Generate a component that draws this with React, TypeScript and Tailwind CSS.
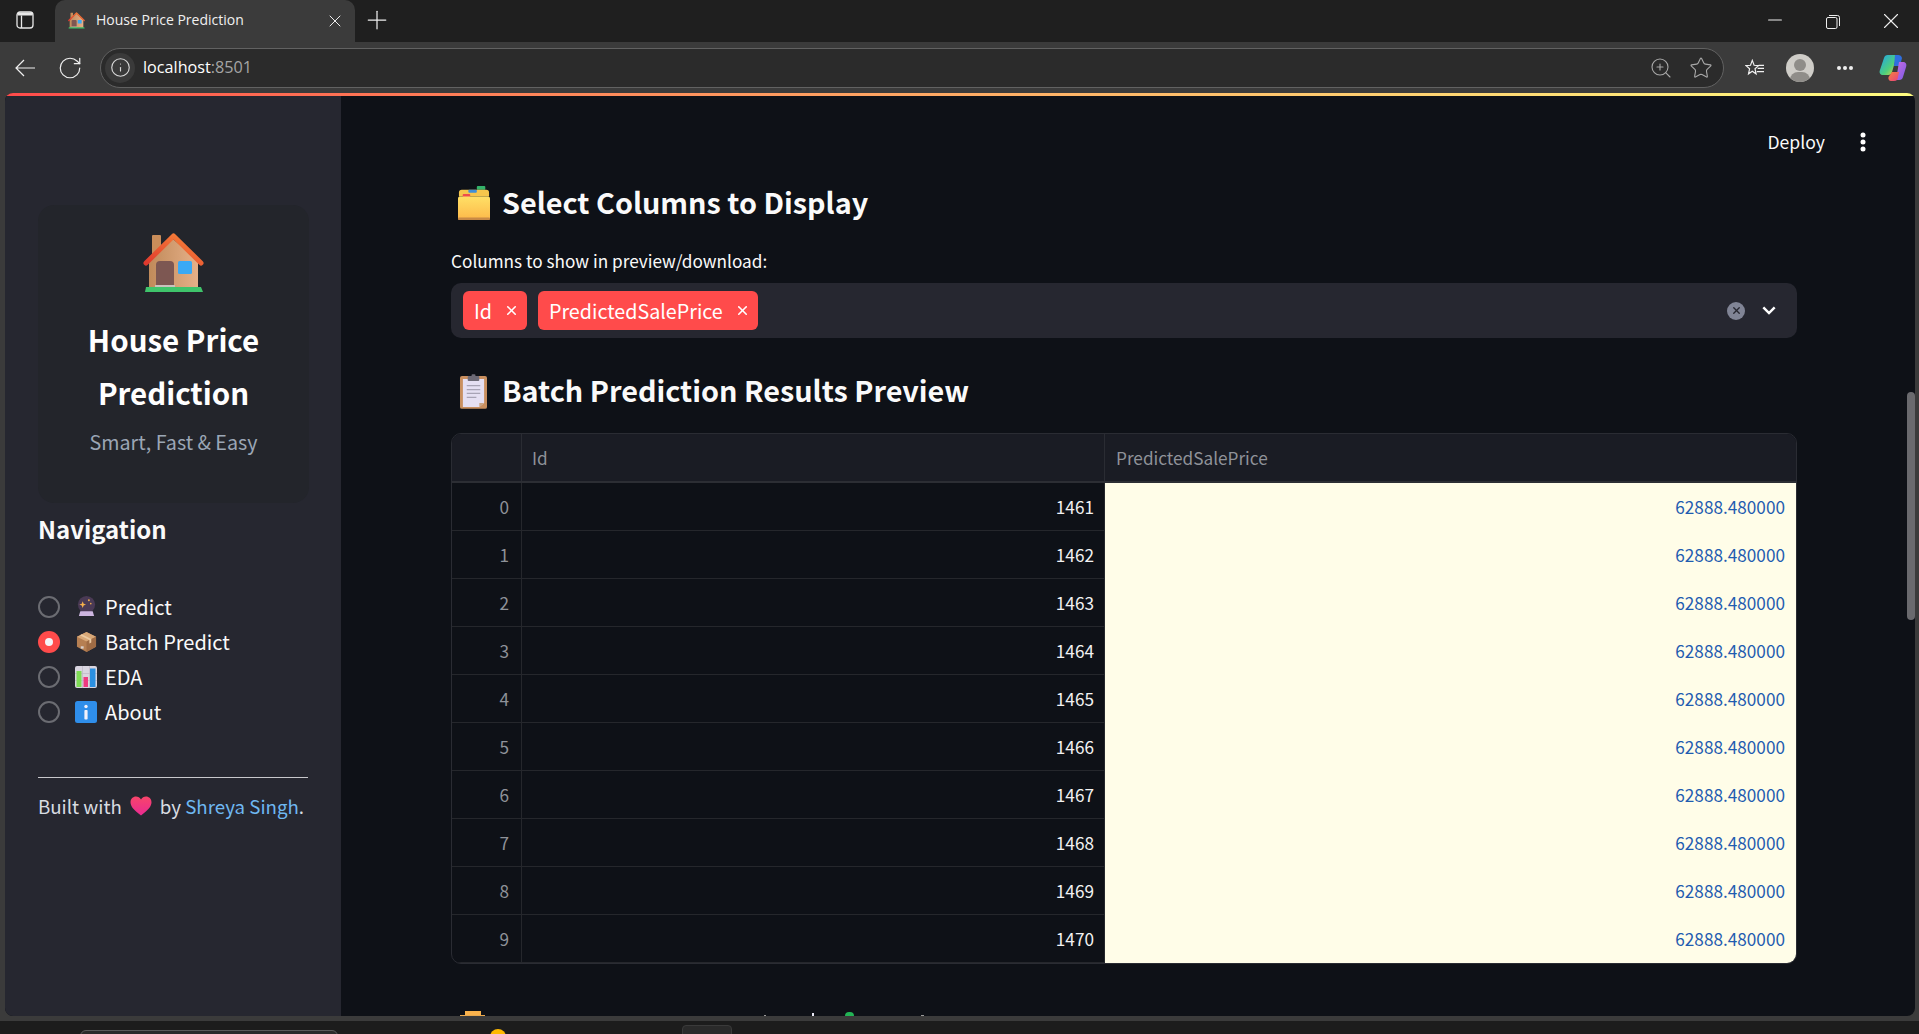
import { Info, Minus, Plus, RotateCw, Star, X, ZoomIn } from "lucide-react";

const sourceFont = "font-['Noto_Sans_CJK_SC','Noto_Sans',sans-serif]";

const rows = [1461, 1462, 1463, 1464, 1465, 1466, 1467, 1468, 1469, 1470];

function HouseEmoji({ className }: { className: string }) {
    return (
        <svg viewBox="0 0 61 60" className={className}>
            <defs>
                <linearGradient id="wall" x1="0" y1="0" x2="1" y2="0">
                    <stop offset="0" stopColor="#c08a5a" />
                    <stop offset="1" stopColor="#e6b088" />
                </linearGradient>
                <linearGradient id="roof" x1="0" y1="1" x2="1" y2="0">
                    <stop offset="0" stopColor="#e0392d" />
                    <stop offset="1" stopColor="#f98a3a" />
                </linearGradient>
            </defs>
            <rect x="9" y="2" width="9" height="24" rx="1" fill="#c98d5a" />
            <path d="M6 28 30 6 55 28V56H6Z" fill="url(#wall)" />
            <path d="M3 30 30.500 3 58 30" fill="none" stroke="url(#roof)" strokeWidth="5" strokeLinecap="round" strokeLinejoin="round" />
            <path d="M13 52V32a4 4 0 0 1 4-4h10a4 4 0 0 1 4 4v20Z" fill="#7d5752" />
            <rect x="35" y="28" width="14" height="13" rx="1.500" fill="#3aa9f5" />
            <rect x="12" y="52" width="20" height="3" fill="#c9c2bd" />
            <path d="M2 59 3 54H58L60 59Z" fill="#3fc46b" />
        </svg>
    );
}

function CrystalBall() {
    return (
        <svg viewBox="0 0 22 22" className="w-[21px] h-[21px]">
            <circle cx="11" cy="9" r="9" fill="#4a3a55" />
            <path d="M7 5.500 8 8l2.500 1L8 10l-1 2.500L6 10 3.500 9 6 8Z" fill="#f5b04c" />
            <circle cx="13.500" cy="4.500" r="1" fill="#f5b04c" />
            <circle cx="15.500" cy="8" r=".8" fill="#f5b04c" />
            <path d="M4.500 16h13l1.500 5H3Z" fill="#cdb5e0" />
        </svg>
    );
}

function BoxEmoji() {
    return (
        <svg viewBox="0 0 22 22" className="w-[21px] h-[21px]">
            <path d="M11 1 21 6v10.500L11 22 1 16.500V6Z" fill="#b67f52" />
            <path d="M11 1 21 6 11 11 1 6Z" fill="#d8a878" />
            <path d="M11 11 21 6v10.500L11 22Z" fill="#a06c45" />
            <path d="M6 3.500 16 8.500V12l-2 1V9.500L4 4.500Z" fill="#eccaa2" />
            <rect x="5" y="16" width="3" height="2.500" fill="#d8d0cc" />
        </svg>
    );
}

function ChartEmoji() {
    return (
        <svg viewBox="0 0 22 22" className="w-[22px] h-[22px]">
            <rect width="22" height="22" rx="2" fill="#d9d5e0" />
            <path d="M0 7.500h22M0 14.500h22M7.500 0v22M14.500 0v22" stroke="#bdb8c6" strokeWidth=".7" />
            <rect x="1.500" y="5" width="5" height="16" fill="#7edb55" />
            <rect x="8.500" y="11" width="4.500" height="10" fill="#ef3a80" />
            <rect x="15" y="2.500" width="5.500" height="18.500" fill="#2b8fe0" />
        </svg>
    );
}

function InfoEmoji() {
    return (
        <svg viewBox="0 0 22 22" className="w-[22px] h-[22px]">
            <rect width="22" height="22" rx="2.500" fill="#2f8eea" />
            <circle cx="11" cy="5.500" r="1.700" fill="#f2f0fa" />
            <rect x="9.400" y="9" width="3.200" height="9.500" rx=".8" fill="#f2f0fa" />
        </svg>
    );
}

function HeartEmoji() {
    return (
        <svg viewBox="0 0 22 20" className="w-[22px] h-[20px] mx-[8px] shrink-0">
            <defs>
                <linearGradient id="heart" x1="0" y1="0" x2="0" y2="1">
                    <stop offset="0" stopColor="#f8456a" />
                    <stop offset="1" stopColor="#e92a92" />
                </linearGradient>
            </defs>
            <path d="M11 19.500C4 14 .5 10.500.5 6.200.5 2.800 3 .5 6 .5c2 0 3.900 1 5 3 1.100-2 3-3 5-3 3 0 5.500 2.300 5.500 5.700 0 4.300-3.500 7.800-10.500 13.300Z" fill="url(#heart)" />
        </svg>
    );
}

function FolderEmoji() {
    return (
        <svg viewBox="0 0 34 36" className="w-[32px] h-[34px] shrink-0">
            <defs>
                <linearGradient id="folder" x1="0" y1="0" x2="0" y2="1">
                    <stop offset="0" stopColor="#ffe066" />
                    <stop offset="1" stopColor="#fdb94a" />
                </linearGradient>
            </defs>
            <rect x="20" y="0" width="9" height="4" rx="1" fill="#33b26a" />
            <path d="M1 7a3 3 0 0 1 3-3h26a3 3 0 0 1 3 3v4H1Z" fill="#f6c64c" />
            <rect x="11" y="4" width="9" height="3" rx="1" fill="#3f8fd8" />
            <rect x="5" y="8.500" width="8" height="3" rx="1" fill="#ee4d4d" />
            <rect x="0" y="11" width="34" height="25" rx="2" fill="url(#folder)" />
            <rect x="0" y="33.500" width="34" height="2.500" rx="1" fill="#c98a45" />
        </svg>
    );
}

function ClipboardEmoji() {
    return (
        <svg viewBox="0 0 28 36" className="w-[27px] h-[35px] shrink-0">
            <rect x="0" y="2" width="28" height="34" rx="2" fill="#c98f5f" />
            <path d="M3 5h22v25l-5 4H3Z" fill="#e5dff2" />
            <path d="M25 30h-5v4Z" fill="#c9a585" />
            <rect x="8" y="2" width="12" height="5" rx="1" fill="#6d6a76" />
            <rect x="12" y="0" width="4" height="3" rx="1" fill="#6d6a76" />
            <path d="M7 12h14M7 16h14M7 20h14M7 24h10" stroke="#a8a3b5" strokeWidth="1.300" />
        </svg>
    );
}

function CopilotIcon() {
    return (
        <svg viewBox="0 0 28 28" className="w-[28px] h-[28px]">
            <defs>
                <linearGradient id="copilotA" x1="0" y1="0" x2="1" y2="1">
                    <stop offset="0" stopColor="#1fa2ef" />
                    <stop offset=".6" stopColor="#4ecf7c" />
                    <stop offset="1" stopColor="#f3d23c" />
                </linearGradient>
                <linearGradient id="copilotB" x1="0" y1="0" x2="1" y2="1">
                    <stop offset="0" stopColor="#f6823c" />
                    <stop offset="1" stopColor="#e8417f" />
                </linearGradient>
                <linearGradient id="copilotC" x1="0" y1="0" x2="1" y2="1">
                    <stop offset="0" stopColor="#c86be0" />
                    <stop offset="1" stopColor="#7a5be8" />
                </linearGradient>
            </defs>
            <path d="M9 1h9l-5 17a4 4 0 0 1-4 3H4c-2.500 0-4-2-3.200-4.500L5 4a4 4 0 0 1 4-3Z" fill="url(#copilotA)" />
            <path d="M16 1h3a4 4 0 0 1 4 3l-2 8h-6Z" fill="#2f6fe0" />
            <path d="M20 8h4c2.500 0 4 2 3.200 4.500L24 23a4 4 0 0 1-4 3h-3Z" fill="url(#copilotC)" />
            <path d="M13 18h7l-1 5a4 4 0 0 1-4 4h-3c-2 0-3-2-2.500-4Z" fill="url(#copilotB)" />
        </svg>
    );
}

function BrowserChrome() {
    return (
        <>
            <div className="h-[42px] bg-[#1f1f1f] flex pl-[16px] text-white font-['Open_Sans',sans-serif]">
                <div className="w-[39px] pt-[11px]">
                    <svg viewBox="0 0 18 18" className="w-[18px] h-[18px]" fill="none" stroke="#e8e8e8" strokeWidth="1.300">
                        <rect x="1" y="1" width="16" height="16" rx="3" />
                        <path d="M5.500 4.500V17" />
                        <rect x="1.500" y="1.500" width="15" height="3" fill="#e8e8e8" stroke="none" />
                    </svg>
                </div>
                <div className="w-[300px] h-[42px] bg-[#3b3b3b] rounded-t-[10px] flex items-center pl-[13px] pr-[10px]">
                    <HouseEmoji className="w-[17px] h-[17px] shrink-0 -mt-[1px]" />
                    <span className="ml-[11px] text-[14px] leading-[18px] -mt-[3px] text-[#f0f0f0] flex-1">House Price Prediction</span>
                    <X strokeWidth={1.200} className="w-[20px] h-[20px] text-[#eeeeee]" />
                </div>
                <Plus strokeWidth={1} className="w-[30px] h-[30px] ml-[7px] mt-[5px] text-[#eeeeee]" />
                <div className="flex-1" />
                <div className="flex items-center h-[42px] pr-[15px] text-[#eeeeee]">
                    <Minus strokeWidth={1.100} className="w-[22px] h-[22px] -mt-[2px]" />
                    <svg viewBox="0 0 14 14" className="w-[14px] h-[14px] ml-[40px] mt-[2px]" fill="none" stroke="#eeeeee" strokeWidth="1">
                        <rect x=".5" y="2.500" width="10.500" height="11" rx="1.500" />
                        <path d="M3 .5h8.500a2 2 0 0 1 2 2V11" />
                    </svg>
                    <X strokeWidth={1} className="w-[26px] h-[26px] ml-[38px]" />
                </div>
            </div>
            <div className="h-[51px] bg-[#3b3b3b] flex items-center pl-[15px] pr-[12px] text-[#efefef] font-['Open_Sans',sans-serif]">
                <svg viewBox="0 0 20 18" className="w-[20px] h-[18px]" fill="none" stroke="#f0f0f0" strokeWidth="1.200">
                    <path d="M20 9H1M9 1 1 9l8 8" />
                </svg>
                <RotateCw strokeWidth={1.100} className="w-[26px] h-[26px] ml-[22px]" />
                <div className="ml-[17px] flex-1 h-[40px] bg-[#2b2b2b] border border-[#626262] rounded-full flex items-center pl-[4px] pr-[10px]">
                    <div className="w-[30px] h-[30px] rounded-full bg-[#3a3a3a] flex items-center justify-center">
                        <Info strokeWidth={1.300} className="w-[21px] h-[21px] text-[#d8d8d8]" />
                    </div>
                    <span className="ml-[8px] text-[16.200px] text-white">localhost<span className="text-[#a5a5a5]">:8501</span></span>
                    <div className="flex-1" />
                    <ZoomIn strokeWidth={1.100} className="w-[24px] h-[24px] text-[#a8a8a8]" />
                    <Star strokeWidth={1.100} className="w-[24px] h-[24px] ml-[16px] text-[#a8a8a8]" />
                </div>
                <svg viewBox="0 0 22 20" className="w-[20px] h-[18px] ml-[21px]" fill="none" stroke="#f0f0f0" strokeWidth="1.300">
                    <path d="M8 1.500 10 7l5 .3-4 3.500 1.200 5.700L8 13.500 3.800 16.500 5 10.800 1 7.300 6 7Z" />
                    <path d="M15 7h6M14 10.500h7M13 14h8" />
                </svg>
                <div className="ml-[21px] w-[28px] h-[28px] rounded-full bg-[#cfcdc8] relative overflow-hidden">
                    <div className="absolute left-[8px] top-[5px] w-[12px] h-[12px] rounded-full bg-[#8f8d89]" />
                    <div className="absolute left-[4px] top-[18px] w-[20px] h-[16px] rounded-full bg-[#8f8d89]" />
                </div>
                <div className="ml-[23px] w-[16px] flex justify-between">
                    <span className="w-[4px] h-[4px] rounded-full bg-[#efefef]" />
                    <span className="w-[4px] h-[4px] rounded-full bg-[#efefef]" />
                    <span className="w-[4px] h-[4px] rounded-full bg-[#efefef]" />
                </div>
                <div className="ml-[26px]"><CopilotIcon /></div>
            </div>
        </>
    );
}

function NavItem({ icon, label, checked }: { icon: React.ReactNode; label: string; checked?: boolean }) {
    return (
        <div className="h-[35px] flex items-center">
            {checked ? (
                <div className="w-[22px] h-[22px] rounded-full bg-[#ff4b4b] flex items-center justify-center">
                    <div className="w-[8px] h-[8px] rounded-full bg-[#f4f4f8]" />
                </div>
            ) : (
                <div className="w-[22px] h-[22px] rounded-full border-2 border-[#6b6c72]" />
            )}
            <div className="w-[22px] ml-[15px] flex justify-center">{icon}</div>
            <span className="ml-[8px] text-[20px] text-[#fafafa]">{label}</span>
        </div>
    );
}

function Sidebar() {
    return (
        <aside className="w-[336px] shrink-0 bg-[#262730] px-[33px] pt-[109px]">
            <div className="w-[271px] h-[298px] bg-[#23252b] rounded-[16px] flex flex-col items-center pt-[28px]">
                <HouseEmoji className="w-[61px] h-[60px]" />
                <h1 className="mt-[20px] w-[230px] text-center text-[29.500px] leading-[53px] font-semibold text-white">House Price Prediction</h1>
                <p className="mt-[7px] text-[19.700px] leading-[32px] text-[#9ba6b5]">Smart, Fast & Easy</p>
            </div>
            <h2 className="mt-[8px] text-[24px] leading-[36px] font-semibold text-[#fafafa]">Navigation</h2>
            <div className="mt-[42px]">
                <NavItem icon={<CrystalBall />} label="Predict" />
                <NavItem icon={<BoxEmoji />} label="Batch Predict" checked />
                <NavItem icon={<ChartEmoji />} label="EDA" />
                <NavItem icon={<InfoEmoji />} label="About" />
            </div>
            <hr className="mt-[48px] w-[270px] border-[#c8c8cc]" />
            <p className="mt-[13px] flex items-center text-[18.700px] leading-[30px] text-[#d8dce2] whitespace-nowrap">
                Built with <HeartEmoji /> by&nbsp;<span className="text-[#6fb8f2]">Shreya Singh</span>.
            </p>
        </aside>
    );
}

function SectionHeading({ icon, title }: { icon: React.ReactNode; title: string }) {
    return (
        <div className="h-[50px] flex items-center">
            <div className="w-[51px] pl-[5px] flex justify-center pr-[11px]">{icon}</div>
            <h2 className="text-[28.800px] leading-[50px] -mt-[2px] font-semibold text-[#fafafa] whitespace-nowrap">{title}</h2>
        </div>
    );
}

function Chip({ label }: { label: string }) {
    return (
        <div className="h-[39px] bg-[#ff4b4b] rounded-[6px] flex items-center pl-[11px] pr-[8px] text-white text-[19.700px]">
            {label}
            <X strokeWidth={2.500} className="w-[15px] h-[15px] ml-[12px]" />
        </div>
    );
}

function ResultsTable() {
    return (
        <div className="border border-[#2a2c33] rounded-[10px] overflow-hidden text-[17.200px]">
            <div className="h-[49px] grid grid-cols-[70px_583px_1fr] bg-[#1a1c24] border-b-2 border-[#2c2e34] text-[#8f9299]">
                <div className="border-r border-[#2a2c33]" />
                <div className="border-r border-[#2a2c33] flex items-center px-[10px]">Id</div>
                <div className="flex items-center px-[11px]">PredictedSalePrice</div>
            </div>
            {rows.map((id, i) => (
                <div key={id} className="h-[48px] grid grid-cols-[70px_583px_1fr]">
                    <div className="border-r border-b border-[#25272c] flex items-center justify-end px-[12px] text-[#8f9299]">{i}</div>
                    <div className="border-r border-b border-[#25272c] flex items-center justify-end px-[10px] text-[#f2f2f2]">{id}</div>
                    <div className="bg-[#fffde8] flex items-center justify-end px-[11px] text-[#1f5cb0]">62888.480000</div>
                </div>
            ))}
        </div>
    );
}

export default function App() {
    return (
        <div className={`h-[1034px] w-full flex flex-col overflow-hidden bg-[#3b3b3b] ${sourceFont}`}>
            <BrowserChrome />
            <div className="h-[923px] ml-[5px] mr-[4px] rounded-[8px] overflow-hidden flex flex-col bg-[#0e1117]">
                <div className="h-[3px] shrink-0 bg-linear-to-r from-[#ff4b4b] to-[#fffd80]" />
                <div className="flex-1 flex min-h-0">
                    <Sidebar />
                    <main className="flex-1 min-w-0 relative overflow-hidden pl-[110px] pr-[118px] pt-[82px]">
                        <div className="absolute right-[49px] top-[33px] flex items-center text-[#fafafa] text-[17.600px]">
                            Deploy
                            <svg viewBox="0 0 6 20" className="w-[6px] h-[20px] ml-[35px]" fill="#ffffff">
                                <circle cx="3" cy="3" r="2.500" />
                                <circle cx="3" cy="10" r="2.500" />
                                <circle cx="3" cy="17" r="2.500" />
                            </svg>
                        </div>
                        <div className="absolute right-0 top-[296px] w-[8px] h-[228px] rounded-full bg-[#6a6a6e]" />

                        <SectionHeading icon={<FolderEmoji />} title="Select Columns to Display" />
                        <label className="block mt-[21px] text-[17.200px] leading-[24px] text-[#fafafa]">Columns to show in preview/download:</label>
                        <div className="mt-[10px] h-[55px] bg-[#262730] rounded-[10px] flex items-center pl-[12px] pr-[21px] gap-[11px]">
                            <Chip label="Id" />
                            <Chip label="PredictedSalePrice" />
                            <div className="flex-1" />
                            <div className="w-[18px] h-[18px] rounded-full bg-[#808495] flex items-center justify-center">
                                <X strokeWidth={3} className="w-[11px] h-[11px] text-[#262730]" />
                            </div>
                            <svg viewBox="0 0 16 10" className="w-[14px] h-[9px] ml-[6px]" fill="none" stroke="#ffffff" strokeWidth="2.800">
                                <path d="M1.500 1.500 8 8l6.500-6.500" />
                            </svg>
                        </div>
                        <div className="mt-[28px]">
                            <SectionHeading icon={<ClipboardEmoji />} title="Batch Prediction Results Preview" />
                        </div>
                        <div className="mt-[17px]">
                            <ResultsTable />
                        </div>
                        {/* next section, only the tops of its glyphs are on screen */}
                        <div className="mt-[47px] h-[5px] overflow-hidden flex items-end">
                            <div className="ml-[9px] w-[25px] flex flex-col items-center">
                                <div className="w-[16px] h-[4px] bg-[#fbb34c]" />
                                <div className="w-[25px] h-[1px] bg-[#e9a94f]" />
                            </div>
                            <div className="ml-[279px] w-[2px] h-[1px] bg-[#9a9a9a]" />
                            <div className="ml-[46px] w-[2px] h-[3px] bg-[#e8e8f4]" />
                            <div className="ml-[31px] w-[9px] h-[4px] bg-[#22b455] rounded-t-[4px]" />
                            <div className="ml-[67px] w-[3px] h-[1px] bg-[#9a9a9a]" />
                        </div>
                    </main>
                </div>
            </div>
            <div className="h-[5px] shrink-0 bg-[#3b3b3b]" />
            <div className="flex-1 bg-[#1c1c1c] relative overflow-hidden">
                <div className="absolute left-[80px] top-[9px] w-[258px] h-[8px] bg-[#2a2a2a] border border-[#5a5a5a] rounded-t-[6px]" />
                <div className="absolute left-[490px] top-[8px] w-[16px] h-[16px] rounded-full bg-[#ffb900]" />
                <div className="absolute left-[682px] top-[4px] w-[50px] h-[16px] rounded-t-[4px] bg-[#2a2a2a] border border-[#3a3a3a]" />
            </div>
        </div>
    );
}
